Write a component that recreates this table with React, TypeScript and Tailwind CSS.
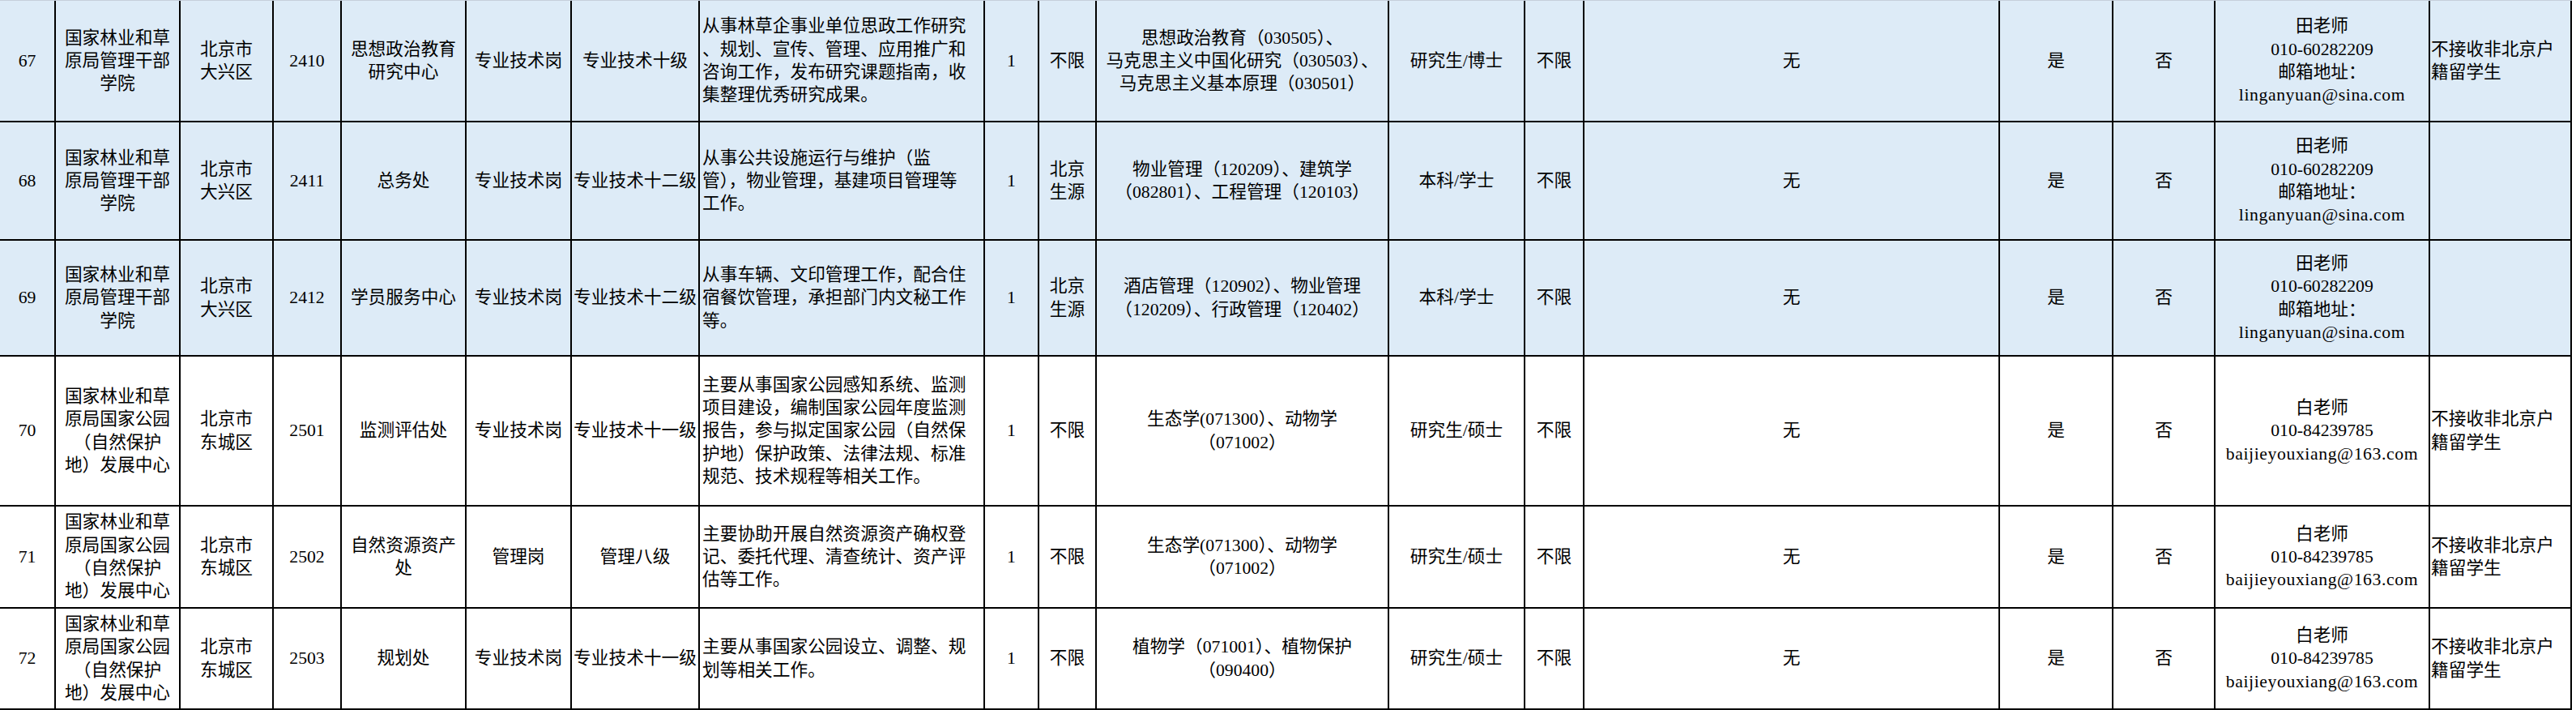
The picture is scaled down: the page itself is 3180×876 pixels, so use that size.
import type { ReactNode } from "react";

// 岗位表（第 67–72 行）。列宽、行高按截图量出来的像素写死。
const GRID_COLS =
  "grid-cols-[69px_154px_115px_84px_154px_130px_158px_352px_67px_71px_361px_168px_73px_513px_140px_126px_265px_175px]";
const GRID_ROWS = "grid-rows-[150px_146px_143px_185px_126px_125px]";

type Row = {
  no: string;
  org: string[];
  loc: string[];
  code: string;
  dept: string[];
  cat: string;
  level: string;
  desc: string[];
  num: string;
  src: string[];
  major: string[];
  edu: string;
  age: string;
  other: string;
  yes: string;
  no2: string;
  contact: string[];
  note: string[];
  blue: boolean;
};

const ORG_A = ["国家林业和草", "原局管理干部", "学院"];
const ORG_B = ["国家林业和草", "原局国家公园", "（自然保护", "地）发展中心"];
const TIAN = ["田老师", "010-60282209", "邮箱地址：", "linganyuan@sina.com"];
const BAI = ["白老师", "010-84239785", "baijieyouxiang@163.com"];
const NOTE = ["不接收非北京户", "籍留学生"];

const ROWS: Row[] = [
  {
    no: "67", org: ORG_A, loc: ["北京市", "大兴区"], code: "2410",
    dept: ["思想政治教育", "研究中心"], cat: "专业技术岗", level: "专业技术十级",
    desc: ["从事林草企事业单位思政工作研究", "、规划、宣传、管理、应用推广和", "咨询工作，发布研究课题指南，收", "集整理优秀研究成果。"],
    num: "1", src: ["不限"],
    major: ["思想政治教育（030505）、", "马克思主义中国化研究（030503）、", "马克思主义基本原理（030501）"],
    edu: "研究生/博士", age: "不限", other: "无", yes: "是", no2: "否",
    contact: TIAN, note: NOTE, blue: true,
  },
  {
    no: "68", org: ORG_A, loc: ["北京市", "大兴区"], code: "2411",
    dept: ["总务处"], cat: "专业技术岗", level: "专业技术十二级",
    desc: ["从事公共设施运行与维护（监", "管），物业管理，基建项目管理等", "工作。"],
    num: "1", src: ["北京", "生源"],
    major: ["物业管理（120209）、建筑学", "（082801）、工程管理（120103）"],
    edu: "本科/学士", age: "不限", other: "无", yes: "是", no2: "否",
    contact: TIAN, note: [], blue: true,
  },
  {
    no: "69", org: ORG_A, loc: ["北京市", "大兴区"], code: "2412",
    dept: ["学员服务中心"], cat: "专业技术岗", level: "专业技术十二级",
    desc: ["从事车辆、文印管理工作，配合住", "宿餐饮管理，承担部门内文秘工作", "等。"],
    num: "1", src: ["北京", "生源"],
    major: ["酒店管理（120902）、物业管理", "（120209）、行政管理（120402）"],
    edu: "本科/学士", age: "不限", other: "无", yes: "是", no2: "否",
    contact: TIAN, note: [], blue: true,
  },
  {
    no: "70", org: ORG_B, loc: ["北京市", "东城区"], code: "2501",
    dept: ["监测评估处"], cat: "专业技术岗", level: "专业技术十一级",
    desc: ["主要从事国家公园感知系统、监测", "项目建设，编制国家公园年度监测", "报告，参与拟定国家公园（自然保", "护地）保护政策、法律法规、标准", "规范、技术规程等相关工作。"],
    num: "1", src: ["不限"],
    major: ["生态学(071300）、动物学", "（071002）"],
    edu: "研究生/硕士", age: "不限", other: "无", yes: "是", no2: "否",
    contact: BAI, note: NOTE, blue: false,
  },
  {
    no: "71", org: ORG_B, loc: ["北京市", "东城区"], code: "2502",
    dept: ["自然资源资产", "处"], cat: "管理岗", level: "管理八级",
    desc: ["主要协助开展自然资源资产确权登", "记、委托代理、清查统计、资产评", "估等工作。"],
    num: "1", src: ["不限"],
    major: ["生态学(071300）、动物学", "（071002）"],
    edu: "研究生/硕士", age: "不限", other: "无", yes: "是", no2: "否",
    contact: BAI, note: NOTE, blue: false,
  },
  {
    no: "72", org: ORG_B, loc: ["北京市", "东城区"], code: "2503",
    dept: ["规划处"], cat: "专业技术岗", level: "专业技术十一级",
    desc: ["主要从事国家公园设立、调整、规", "划等相关工作。"],
    num: "1", src: ["不限"],
    major: ["植物学（071001）、植物保护", "（090400）"],
    edu: "研究生/硕士", age: "不限", other: "无", yes: "是", no2: "否",
    contact: BAI, note: NOTE, blue: false,
  },
];

function Cell({ blue, left = false, pad = "", children }: {
  blue: boolean;
  left?: boolean;
  pad?: string;
  children: ReactNode;
}) {
  return (
    <div
      className={`flex flex-col justify-center border-r-2 border-b-2 border-black overflow-hidden ${
        blue ? "bg-[#ddebf7]" : "bg-white"
      } ${left ? "items-start text-left" : "items-center text-center"} ${pad}`}
    >
      {children}
    </div>
  );
}

function Lines({ lines }: { lines: string[] }) {
  return (
    <>
      {lines.map((l, i) => (
        // 邮箱在原表里是等宽半角字，这里用字距撑开一点
        <div key={i} className={`whitespace-nowrap ${l.includes("@") ? "tracking-[0.6px]" : ""}`}>
          {l}
        </div>
      ))}
    </>
  );
}

export default function App() {
  return (
    <div className="w-[3180px] h-[876px] bg-white overflow-hidden">
      <div
        className={`grid ${GRID_COLS} ${GRID_ROWS} w-[3175px] border-t border-[#c6cfdb] text-black text-[21.7px] leading-[28.3px] font-['Liberation_Serif','Noto_Sans_CJK_SC',serif]`}
      >
        {ROWS.map((r) => (
          <div key={r.no} className="contents">
            <Cell blue={r.blue}>{r.no}</Cell>
            <Cell blue={r.blue}><Lines lines={r.org} /></Cell>
            <Cell blue={r.blue}><Lines lines={r.loc} /></Cell>
            <Cell blue={r.blue}>{r.code}</Cell>
            <Cell blue={r.blue}><Lines lines={r.dept} /></Cell>
            <Cell blue={r.blue}>{r.cat}</Cell>
            <Cell blue={r.blue}>{r.level}</Cell>
            <Cell blue={r.blue} left pad="pl-[3px]"><Lines lines={r.desc} /></Cell>
            <Cell blue={r.blue}>{r.num}</Cell>
            <Cell blue={r.blue}><Lines lines={r.src} /></Cell>
            <Cell blue={r.blue}><Lines lines={r.major} /></Cell>
            <Cell blue={r.blue}>{r.edu}</Cell>
            <Cell blue={r.blue}>{r.age}</Cell>
            <Cell blue={r.blue}>{r.other}</Cell>
            <Cell blue={r.blue}>{r.yes}</Cell>
            <Cell blue={r.blue}>{r.no2}</Cell>
            <Cell blue={r.blue}><Lines lines={r.contact} /></Cell>
            <Cell blue={r.blue} left pad="pl-[1px]"><Lines lines={r.note} /></Cell>
          </div>
        ))}
      </div>
    </div>
  );
}
